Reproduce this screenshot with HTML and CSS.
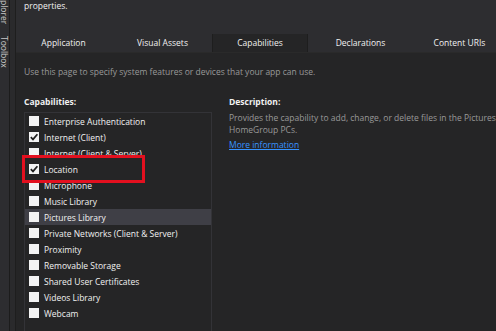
FILE: index.html
```html
<!DOCTYPE html>
<html lang="en">
<head>
    <meta charset="UTF-8">
    <title>Package.appxmanifest - Capabilities</title>
    <link rel="stylesheet" href="styles.css">
</head>
<body>
    <div class="side-tabs">
        <div class="side-inner">
            <span class="side-label">Solution Explorer</span>
            <span class="side-label">Toolbox</span>
        </div>
    </div>
    <div class="gutter"></div>
    <div class="designer">
        <div class="intro">
            <p>The properties of the deployment package are contained in the app manifest file. You can use the Manifest Designer to set or modify one or more of the<br>properties.</p>
        </div>
        <div class="tabs">
            <div class="tab">Application</div>
            <div class="tab">Visual Assets</div>
            <div class="tab active">Capabilities</div>
            <div class="tab">Declarations</div>
            <div class="tab">Content URIs</div>
        </div>
        <div class="page">
            <p class="hint">Use this page to specify system features or devices that your app can use.</p>
            <div class="columns">
                <div class="caps">
                    <h3>Capabilities:</h3>
                    <ul class="cap-list" id="cap-list">
                        <!-- capability rows are added here -->
                    </ul>
                    <div class="callout"></div>
                </div>
                <div class="desc">
                    <h3>Description:</h3>
                    <p class="desc-text">Provides the capability to add, change, or delete files in the Pictures Library, including Pictures libraries on local computers and<br>HomeGroup PCs.</p>
                    <a href="#" class="more">More information</a>
                </div>
            </div>
        </div>
    </div>

    <script>
        const capabilities = [
            { name: "Enterprise Authentication", checked: false },
            { name: "Internet (Client)", checked: true },
            { name: "Internet (Client & Server)", checked: false },
            { name: "Location", checked: true },
            { name: "Microphone", checked: false },
            { name: "Music Library", checked: false },
            { name: "Pictures Library", checked: false, selected: true },
            { name: "Private Networks (Client & Server)", checked: false },
            { name: "Proximity", checked: false },
            { name: "Removable Storage", checked: false },
            { name: "Shared User Certificates", checked: false },
            { name: "Videos Library", checked: false },
            { name: "Webcam", checked: false }
        ];

        const list = document.getElementById('cap-list');
        capabilities.forEach(cap => {
            const row = document.createElement('li');
            row.className = cap.selected ? 'cap selected' : 'cap';
            const tick = cap.checked
                ? '<svg viewBox="0 0 10 10" width="10" height="10"><path d="M1.8 5.2 L4 7.4 L8.4 2.2" fill="none" stroke="#1e1e1e" stroke-width="1.7"/></svg>'
                : '';
            row.innerHTML = `<span class="box">${tick}</span><span class="label"></span>`;
            row.querySelector('.label').textContent = cap.name;
            list.appendChild(row);
        });
    </script>
</body>
</html>
```

FILE: styles.css
```css
body {
    margin: 0;
    width: 496px;
    height: 331px;
    overflow: hidden;
    display: flex;
    background: #252526;
    color: #f1f1f1;
    font-family: 'Open Sans', 'Noto Sans', sans-serif;
    font-size: 8.5px;
}
p, h3, ul {
    margin: 0;
    padding: 0;
}
.side-tabs {
    width: 9px;
    flex: 0 0 9px;
    background: #2d2d30;
    border-right: 1px solid #1c1c1c;
    overflow: hidden;
}
.side-inner {
    writing-mode: vertical-rl;
    margin-top: -44px;
    margin-left: -1px;
    color: #c8c8c8;
    font-size: 8.5px;
    line-height: 10px;
    white-space: nowrap;
}
.side-label {
    margin-bottom: 10px;
}
.gutter {
    flex: 0 0 5px;
    background: #2a2a2c;
    border-right: 1px solid #1e1e1e;
}
.designer {
    flex: 1;
    min-width: 0;
    display: flex;
    flex-direction: column;
    overflow: hidden;
}
.intro {
    flex: 0 0 34px;
    background: #2d2d30;
    padding-left: 8px;
    overflow: hidden;
}
.intro p {
    margin-top: -12px;
    line-height: 12px;
    white-space: nowrap;
    color: #f1f1f1;
}
.tabs {
    flex: 0 0 18px;
    background: #2d2d30;
    display: flex;
    margin-left: -2px;
    border-bottom: 1px solid #2a2a2a;
}
.tab {
    flex: 0 0 99px;
    text-align: center;
    line-height: 18px;
    color: #f1f1f1;
}
.tab.active {
    background: #252526;
    flex-basis: 96px;
    margin-right: 3px;
    box-shadow: inset 1px 0 0 #1e1e1e, inset -1px 0 0 #1e1e1e;
}
.page {
    flex: 1;
    min-height: 0;
    padding: 13px 0 0 8px;
}
.hint {
    line-height: 12px;
    color: #999999;
    white-space: nowrap;
}
.columns {
    display: flex;
    gap: 17px;
    margin-top: 18px;
}
.caps {
    flex: 0 0 188px;
    position: relative;
}
h3 {
    font-size: 8.5px;
    font-weight: bold;
    line-height: 12px;
    color: #f1f1f1;
}
.cap-list {
    list-style: none;
    margin-top: 4px;
    height: 226px;
    border: 1px solid #333337;
}
.cap {
    height: 16px;
    display: flex;
    align-items: center;
    gap: 5px;
    padding-left: 4px;
    color: #f1f1f1;
}
.cap.selected {
    background: #3f3f46;
}
.box {
    width: 10px;
    height: 10px;
    background: #f3f3f3;
    display: flex;
}
.callout {
    position: absolute;
    left: -2px;
    top: 59px;
    width: 117px;
    height: 22px;
    border: 3px solid #e3101f;
}
.desc {
    flex: 1;
    min-width: 0;
    white-space: nowrap;
}
.desc-text {
    margin-top: 4px;
    line-height: 12px;
    color: #999999;
}
.more {
    display: inline-block;
    margin-top: 3px;
    color: #3794ff;
    text-decoration: underline;
}
```
